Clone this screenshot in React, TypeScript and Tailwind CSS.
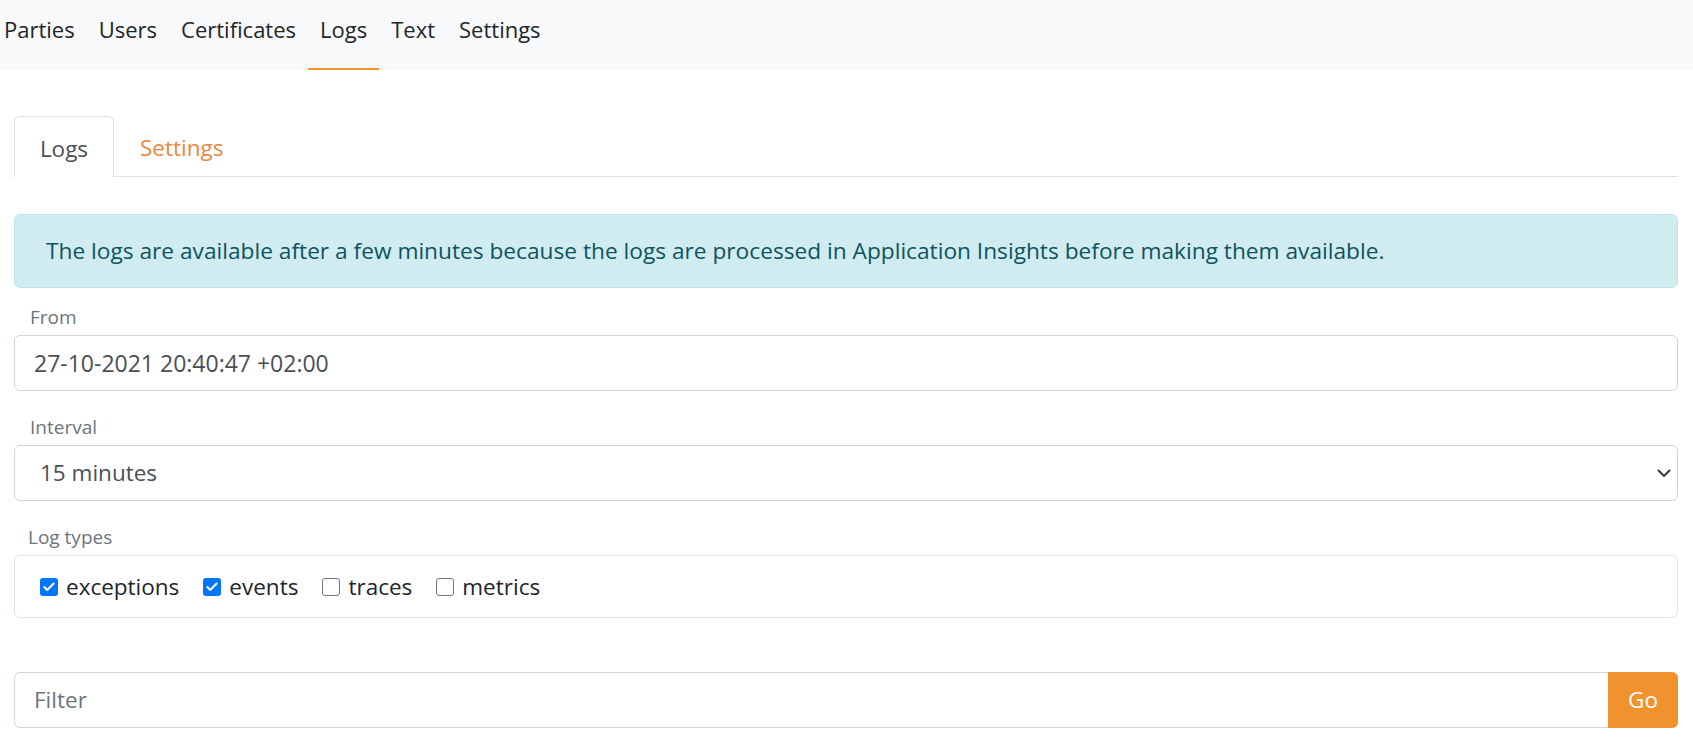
import { Check } from "lucide-react";

const NAV = ["Parties", "Users", "Certificates", "Logs", "Text", "Settings"];
const TYPES = [
  { name: "exceptions", on: true },
  { name: "events", on: true },
  { name: "traces", on: false },
  { name: "metrics", on: false },
];

function Box({ on }: { on: boolean }) {
  return on ? (
    <span className="flex h-[18px] w-[18px] items-center justify-center rounded-[3px] bg-[#0075ff]">
      <Check size={14} strokeWidth={3.5} className="text-white" />
    </span>
  ) : (
    <span className="h-[18px] w-[18px] rounded-[3px] border-[1.5px] border-[#767676] bg-white" />
  );
}

export default function App() {
  return (
    <div className="min-h-screen bg-white text-[22.5px] text-[#212529]" style={{ fontFamily: '"Open Sans", sans-serif' }}>
      <nav className="flex h-[70px] bg-[#f8f9fa]">
        <div className="-ml-[8px] flex text-[22px]">
          {NAV.map((n) => (
            <div key={n} className={`flex h-full items-start px-[12px] pt-[13px] leading-[32px] border-b-2 ${n === "Logs" ? "border-[#f0932f]" : "border-transparent"}`}>
              {n}
            </div>
          ))}
        </div>
      </nav>

      <main className="px-[14px] pr-[15px] pt-[46px]">
        <div className="flex h-[61px] border-b border-[#dee2e6]">
          <div className="-mb-px flex w-[100px] items-center justify-center rounded-t-[6px] border border-b-0 border-[#dee2e6] bg-white pt-[3px] text-[#495057]">
            Logs
          </div>
          <div className="flex items-center px-[26px] pt-[3px] text-[#e8883a]">Settings</div>
        </div>

        <div className="mt-[37px] flex h-[74px] items-center rounded-[6px] border border-[#bee5eb] bg-[#d1ecf1] px-[31px] text-[22.7px] text-[#0c5460]">
          The logs are available after a few minutes because the logs are processed in Application Insights before making them available.
        </div>

        <div className="mt-[18px] px-[16px] text-[19px] leading-[22px] text-[#6c757d]">From</div>
        <div className="mt-[7px] flex h-[56px] items-center rounded-[6px] border border-[#ced4da] px-[19px] text-[23px] text-[#495057]">
          27-10-2021 20:40:47 +02:00
        </div>

        <div className="mt-[25px] px-[16px] text-[19px] leading-[22px] text-[#6c757d]">Interval</div>
        <div className="mt-[7px] flex h-[56px] items-center justify-between rounded-[6px] border border-[#ced4da] pl-[25px] pr-[6px] text-[#495057]">
          <span>15 minutes</span>
          <svg width="14" height="9" viewBox="0 0 14 9" fill="none" stroke="#343a40" strokeWidth="2" strokeLinecap="round" strokeLinejoin="round">
            <path d="M1.5 1.5l5.5 5.5 5.5-5.5" />
          </svg>
        </div>

        <div className="mt-[25px] px-[14px] text-[19px] leading-[22px] text-[#6c757d]">Log types</div>
        <div className="mt-[7px] flex h-[63px] items-center gap-[24px] rounded-[6px] border border-[#dee2e6] px-[25px]">
          {TYPES.map((t) => (
            <label key={t.name} className="flex items-center gap-[8px]">
              <Box on={t.on} />
              <span>{t.name}</span>
            </label>
          ))}
        </div>

        <div className="mt-[54px] flex h-[56px] rounded-[6px] border border-[#ced4da]">
          <div className="flex flex-1 items-center px-[19px] text-[#6c757d]">Filter</div>
          <div className="-my-px -mr-px flex w-[70px] items-center justify-center rounded-r-[6px] bg-[#f0932f] text-white">Go</div>
        </div>
      </main>
    </div>
  );
}
